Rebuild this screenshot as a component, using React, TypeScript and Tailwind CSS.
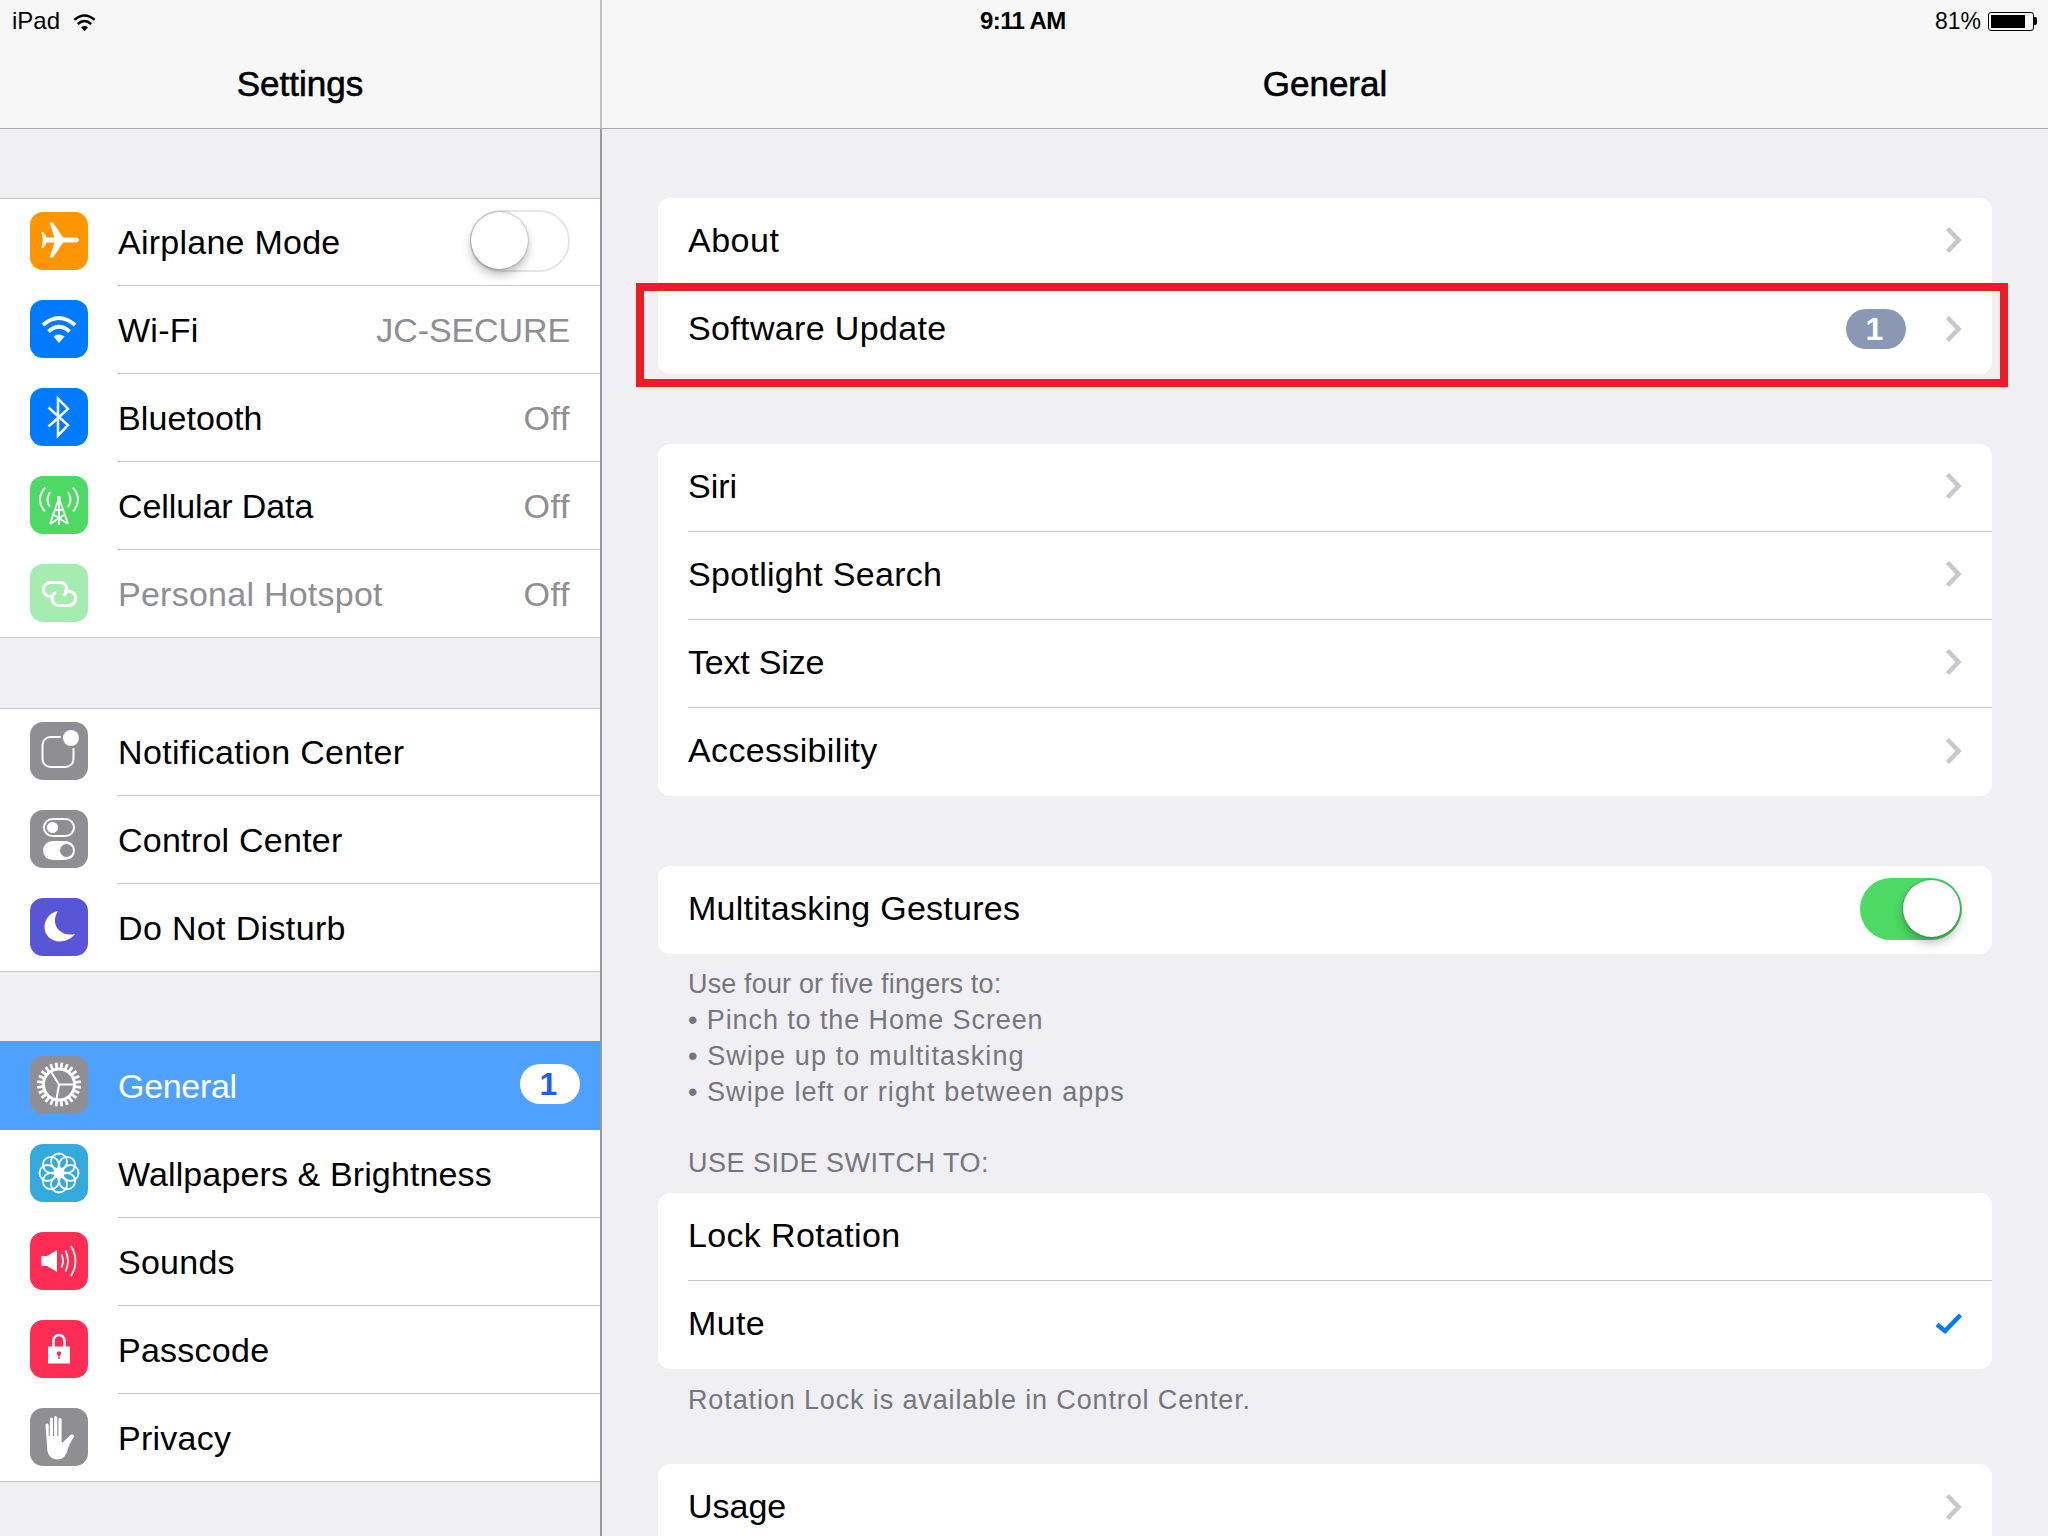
import type { ReactNode } from 'react'

const deg = (a: number) => (a * Math.PI) / 180

function Tile({ color, children }: { color: string; children: ReactNode }) {
  return (
    <div className={`-mt-[2px] h-[58px] w-[58px] shrink-0 rounded-[13px] ${color}`}>
      <svg viewBox="0 0 58 58" className="h-full w-full">
        {children}
      </svg>
    </div>
  )
}

function WifiGlyph({ color }: { color: string }) {
  return (
    <g fill="none" stroke={color} strokeWidth="4">
      <path d="M13 25Q29 11 45 25" />
      <path d="M18.5 31.5Q29 22 39.5 31.5" />
      <path d="M23.5 36.5Q29 32.5 34.5 36.5L29 43Z" fill={color} stroke="none" />
    </g>
  )
}

const PlaneIcon = () => (
  <Tile color="bg-[#ff9500]">
    <path
      fill="#fff"
      d="M49 28c0 1.5-1.5 2.5-3 2.5H33L23 45.5h-3.500L24.500 30.500h-8L13.500 36h-2L13 28l-1.500-8h2l3 5.500h8L19.500 10.500H23L33 25.500h13c1.500 0 3 1 3 2.500Z"
    />
  </Tile>
)

const WifiIcon = () => (
  <Tile color="bg-[#007aff]">
    <WifiGlyph color="#fff" />
  </Tile>
)

const BluetoothIcon = () => (
  <Tile color="bg-[#007aff]">
    <path d="M18.500 19.500 38 37 28 47.500V10.500L38 21 18.500 38.500" fill="none" stroke="#fff" strokeWidth="2.500" />
  </Tile>
)

const CellularIcon = () => (
  <Tile color="bg-[#4cd964]">
    <g fill="none" stroke="#fff" strokeWidth="1.800">
      <path d="M29 22 20 48M29 22l9 26M29 22v27M25 34h8M24 39l14 9M34 39l-14 9" />
      <path d="M15 11.500Q5 24 15 35.500M43 11.500Q53 24 43 35.500" strokeWidth="2" />
      <path d="M20 16q-5 8 0 15M38 16q5 8 0 15" strokeWidth="2" />
    </g>
    <circle cx="29" cy="22" r="2" fill="#fff" />
  </Tile>
)

const HotspotIcon = () => (
  <Tile color="bg-[#a6ecb1]">
    <g fill="none" stroke="#fff" strokeWidth="3">
      <path d="M24 32.500h-3.500a7 7 0 0 1 0-14H30a7 7 0 0 1 7 7c0 3-2 5-4 6" />
      <path d="M34 27h4.500a7 7 0 0 1 0 14.500H29a7 7 0 0 1-7-7c0-3 2-5 4-6" />
    </g>
  </Tile>
)

const NotificationIcon = () => (
  <Tile color="bg-[#8e8e93]">
    <rect x="12.500" y="15" width="31" height="30" rx="8" fill="none" stroke="#fff" strokeWidth="2" />
    <circle cx="41" cy="16" r="10.500" fill="#8e8e93" />
    <circle cx="41" cy="16" r="8" fill="#fff" />
  </Tile>
)

const ControlIcon = () => (
  <Tile color="bg-[#8e8e93]">
    <rect x="14" y="9" width="30" height="17" rx="8.500" fill="none" stroke="#fff" strokeWidth="2" />
    <circle cx="22.500" cy="17.500" r="5.500" fill="#fff" />
    <rect x="13" y="31" width="32" height="19" rx="9.500" fill="#fff" />
    <circle cx="36.500" cy="40.500" r="6.500" fill="#8e8e93" />
  </Tile>
)

const MoonIcon = () => (
  <Tile color="bg-[#5856d6]">
    <path
      fill="#fff"
      d="M28 13C19 15 14.500 22 14.500 29 14.500 37 21 43.500 29.500 43.500 36 43.500 42 40 45 36 35 38.500 26 33 25 24 24.500 20 26 16 28 13Z"
    />
  </Tile>
)

const GearIcon = () => (
  <Tile color="bg-[#8e8e93]">
    <g stroke="#fff" fill="none">
      <circle cx="29" cy="28.500" r="15.500" strokeWidth="3" />
      {Array.from({ length: 24 }, (_, i) => {
        const a = deg(i * 15 + 7.500)
        return (
          <line
            key={i}
            x1={29 + 15 * Math.cos(a)}
            y1={28.500 + 15 * Math.sin(a)}
            x2={29 + 22 * Math.cos(a)}
            y2={28.500 + 22 * Math.sin(a)}
            strokeWidth="2.800"
          />
        )
      })}
      <path d="M29 28.500 21.500 16.500M29 28.500H44M29 28.500 26.500 43" strokeWidth="2" />
    </g>
  </Tile>
)

const FlowerIcon = () => (
  <Tile color="bg-[#34aadc]">
    <g fill="none" stroke="#fff" strokeWidth="1.800">
      {Array.from({ length: 8 }, (_, i) => {
        const a = deg(i * 45)
        return <circle key={i} cx={29 + 11.500 * Math.cos(a)} cy={29 + 11.500 * Math.sin(a)} r="8" />
      })}
    </g>
    <circle cx="29" cy="29" r="3.500" fill="#fff" />
  </Tile>
)

const SoundIcon = () => (
  <Tile color="bg-[#ff2d55]">
    <path fill="#fff" d="M11.500 24H17l10-6v22l-10-6h-5.500Z" />
    <g fill="none" stroke="#fff" strokeWidth="1.800">
      <path d="M31.500 22.500Q34.500 29 31.500 35.500" />
      <path d="M35.500 18.500Q40.500 29 35.500 39.500" />
      <path d="M41 14Q50 29 41 44" />
    </g>
  </Tile>
)

const LockIcon = () => (
  <Tile color="bg-[#ff2d55]">
    <path d="M23.500 27v-6.500a5.500 5.500 0 0 1 11 0V27" fill="none" stroke="#fff" strokeWidth="2.500" />
    <rect x="18" y="26.500" width="22" height="17" fill="#fff" />
    <circle cx="29" cy="33.500" r="2.200" fill="#ff2d55" />
    <rect x="28.300" y="33.500" width="1.400" height="5.500" fill="#ff2d55" />
  </Tile>
)

const HandIcon = () => (
  <Tile color="bg-[#8e8e93]">
    <path
      fill="#fff"
      d="M15.500 17a1.600 1.600 0 0 1 3.200 0v11h1.100V11a1.600 1.600 0 0 1 3.200 0v17h1.100V9.500a1.600 1.600 0 0 1 3.200 0V28h1.100V11.500a1.600 1.600 0 0 1 3.200 0V34l1 .5 8-7.500c2-1.500 4.500.5 3 2.500-3 4-5 9-6.500 14-1.500 5-5 8-9.500 8-7 0-10.500-5-10.500-12.500Z"
    />
  </Tile>
)

function Chevron() {
  return (
    <svg width="18" height="28" viewBox="0 0 18 28" className="shrink-0">
      <path d="M3.500 2.500 14.500 14 3.500 25.500" fill="none" stroke="#c7c7cc" strokeWidth="4.500" />
    </svg>
  )
}

function Toggle({ on }: { on?: boolean }) {
  if (on) {
    return (
      <div className="flex h-[62px] w-[102px] items-center justify-end rounded-full bg-[#4cd964] pr-[2px]">
        <div className="h-[57px] w-[57px] rounded-full bg-white shadow-[0_6px_10px_rgba(0,0,0,0.25),0_0_2px_rgba(0,0,0,0.5)]" />
      </div>
    )
  }
  return (
    <div className="-mt-[2px] flex h-[62px] w-[100px] items-center rounded-full border-2 border-[#e5e5e5]">
      <div className="-ml-[1px] h-[57px] w-[57px] rounded-full bg-white shadow-[0_6px_10px_rgba(0,0,0,0.25),0_0_2px_rgba(0,0,0,0.5)]" />
    </div>
  )
}

type SideRow = {
  label: string
  icon: ReactNode
  value?: string
  dim?: boolean
  trailing?: ReactNode
  selected?: boolean
  tracking?: string
}

function SidebarRow({ row, first, last }: { row: SideRow; first: boolean; last: boolean }) {
  const edge = first
    ? 'shadow-[inset_0_1px_0_#c8c7cc]'
    : last
      ? 'shadow-[inset_0_-1px_0_#c8c7cc]'
      : ''
  return (
    <div
      className={`flex items-center pl-[30px] ${
        row.selected ? '-mt-px h-[89px] border-t border-[#4fa1ff] bg-[#4fa1ff]' : `h-[88px] bg-white ${edge}`
      }`}
    >
      {row.icon}
      <div
        className={`ml-[30px] flex h-full min-w-0 flex-1 items-center justify-between pr-[30px] ${
          last || row.selected ? '' : 'border-b border-[#c8c7cc]'
        }`}
      >
        <span
          className={`pt-[1px] text-[34px] ${row.tracking ?? 'tracking-[0.25px]'} ${
            row.selected ? 'text-white' : row.dim ? 'text-[#8e8e93]' : 'text-black'
          }`}
        >
          {row.label}
        </span>
        {row.value && (
          <span
            className={`pt-[1px] text-[34px] text-[#8e8e93] ${
              row.value === 'Off' ? 'tracking-[0.6px]' : 'tracking-[-0.1px]'
            }`}
          >
            {row.value}
          </span>
        )}
        {row.trailing}
      </div>
    </div>
  )
}

function SidebarGroup({ rows }: { rows: SideRow[] }) {
  return (
    <div>
      {rows.map((row, i) => (
        <SidebarRow key={row.label} row={row} first={i === 0} last={i === rows.length - 1} />
      ))}
    </div>
  )
}

const groupOne: SideRow[] = [
  { label: 'Airplane Mode', icon: <PlaneIcon />, trailing: <Toggle /> },
  { label: 'Wi-Fi', icon: <WifiIcon />, value: 'JC-SECURE' },
  { label: 'Bluetooth', icon: <BluetoothIcon />, value: 'Off', tracking: 'tracking-[0.1px]' },
  { label: 'Cellular Data', icon: <CellularIcon />, value: 'Off', tracking: 'tracking-[-0.1px]' },
  { label: 'Personal Hotspot', icon: <HotspotIcon />, value: 'Off', dim: true },
]

const groupTwo: SideRow[] = [
  { label: 'Notification Center', icon: <NotificationIcon />, tracking: 'tracking-[0.35px]' },
  { label: 'Control Center', icon: <ControlIcon /> },
  { label: 'Do Not Disturb', icon: <MoonIcon />, tracking: 'tracking-[0.35px]' },
]

const groupThree: SideRow[] = [
  {
    label: 'General',
    icon: <GearIcon />,
    selected: true,
    tracking: 'tracking-[-0.3px]',
    trailing: (
      <div className="-mr-[10px] -mt-[4px] flex h-[40px] w-[60px] items-center justify-center rounded-full bg-white pr-[3px] text-[32px] font-bold text-[#1f5fe8]">
        1
      </div>
    ),
  },
  { label: 'Wallpapers & Brightness', icon: <FlowerIcon />, tracking: 'tracking-[0.12px]' },
  { label: 'Sounds', icon: <SoundIcon /> },
  { label: 'Passcode', icon: <LockIcon /> },
  { label: 'Privacy', icon: <HandIcon /> },
]

function Card({ children }: { children: ReactNode }) {
  return <div className="overflow-hidden rounded-[12px] bg-white">{children}</div>
}

function CardRow({
  label,
  last,
  tracking = 'tracking-[0.25px]',
  children,
}: {
  label: string
  last?: boolean
  tracking?: string
  children?: ReactNode
}) {
  return (
    <div className="h-[88px] pl-[30px]">
      <div
        className={`flex h-full items-center justify-between pb-[3px] pr-[30px] ${last ? '' : 'border-b border-[#c8c7cc]'}`}
      >
        <span className={`text-[34px] text-black ${tracking}`}>{label}</span>
        {children}
      </div>
    </div>
  )
}

export default function App() {
  const titleClass = 'pt-[16px] text-center text-[35px] text-black [-webkit-text-stroke:0.6px_black]'
  return (
    <div className="flex h-[1536px] w-[2048px] overflow-hidden bg-[#efeff4] font-['Liberation_Sans',Arial,sans-serif]">
      {/* Settings list */}
      <aside className="flex w-[602px] shrink-0 flex-col">
        <header className="h-[129px] shrink-0 border-b border-r-2 border-b-[#a9a9ae] border-r-[#c0c0c4] bg-[#f7f7f8]">
          <div className="flex h-[42px] items-center gap-[12px] pl-[12px]">
            <span className="text-[24px] text-black">iPad</span>
            <svg width="25" height="21" viewBox="11 11 36 33">
              <WifiGlyph color="#000" />
            </svg>
          </div>
          <h1 className={titleClass}>Settings</h1>
        </header>
        <div className="flex flex-1 flex-col gap-[70px] border-r-2 border-[#98989d] pt-[69px]">
          <SidebarGroup rows={groupOne} />
          <SidebarGroup rows={groupTwo} />
          <SidebarGroup rows={groupThree} />
        </div>
      </aside>

      {/* General pane */}
      <main className="flex min-w-0 flex-1 flex-col">
        <header className="h-[129px] shrink-0 border-b border-[#a9a9ae] bg-[#f7f7f8]">
          <div className="flex h-[42px] items-center justify-between pl-[378px] pr-[11px]">
            <span className="text-[24px] font-bold tracking-[-0.6px] text-black">9:11 AM</span>
            <div className="flex items-center gap-[7px]">
              <span className="text-[23px] text-black">81%</span>
              <div className="flex items-center">
                <div className="h-[19px] w-[46px] rounded-[3px] border border-black p-[2px]">
                  <div className="h-full w-[34px] bg-black" />
                </div>
                <div className="h-[8px] w-[3px] rounded-r-[2px] bg-black" />
              </div>
            </div>
          </div>
          <h1 className={titleClass}>General</h1>
        </header>

        <div className="flex flex-col px-[56px] pt-[69px]">
          <div className="relative">
            <Card>
              <CardRow label="About" tracking="tracking-[0.5px]">
                <Chevron />
              </CardRow>
              <CardRow label="Software Update" last tracking="tracking-[0.35px]">
                <div className="flex items-center gap-[38px]">
                  <div className="flex h-[40px] w-[60px] items-center justify-center rounded-full bg-[#8a98b3] pr-[3px] text-[32px] font-bold text-white">
                    1
                  </div>
                  <Chevron />
                </div>
              </CardRow>
            </Card>
            {/* red annotation frame */}
            <div className="absolute -left-[22px] -right-[16px] top-[85px] h-[104px] border-[8px] border-[#ed1c24]" />
          </div>

          <div className="mt-[70px]">
            <Card>
              <CardRow label="Siri" tracking="tracking-[0px]">
                <Chevron />
              </CardRow>
              <CardRow label="Spotlight Search" tracking="tracking-[0.3px]">
                <Chevron />
              </CardRow>
              <CardRow label="Text Size" tracking="tracking-[-0.2px]">
                <Chevron />
              </CardRow>
              <CardRow label="Accessibility" last tracking="tracking-[0.35px]">
                <Chevron />
              </CardRow>
            </Card>
          </div>

          <div className="mt-[70px]">
            <Card>
              <CardRow label="Multitasking Gestures" last>
                <Toggle on />
              </CardRow>
            </Card>
          </div>

          <div className="mt-[12px] pl-[30px] text-[27px] leading-[36px] text-[#76767b]">
            <p className="tracking-[0.15px]">Use four or five fingers to:</p>
            <p className="tracking-[0.9px]">• Pinch to the Home Screen</p>
            <p className="tracking-[1.1px]">• Swipe up to multitasking</p>
            <p className="tracking-[1.05px]">• Swipe left or right between apps</p>
          </div>

          <p className="mb-[12px] mt-[35px] pl-[30px] text-[27px] leading-[36px] tracking-[0.5px] text-[#76767b]">
            USE SIDE SWITCH TO:
          </p>

          <Card>
            <CardRow label="Lock Rotation" tracking="tracking-[0.35px]" />
            <CardRow label="Mute" last tracking="tracking-[0.35px]">
              <svg width="28" height="22" viewBox="0 0 28 22" className="-mr-[1px] shrink-0">
                <path d="M2 11.500 10 18 25.500 2" fill="none" stroke="#007aff" strokeWidth="4.500" />
              </svg>
            </CardRow>
          </Card>

          <p className="mb-[46px] mt-[13px] pl-[30px] text-[27px] leading-[36px] tracking-[0.87px] text-[#76767b]">
            Rotation Lock is available in Control Center.
          </p>

          <Card>
            <CardRow label="Usage" last tracking="tracking-[0px]">
              <Chevron />
            </CardRow>
          </Card>
        </div>
      </main>
    </div>
  )
}
